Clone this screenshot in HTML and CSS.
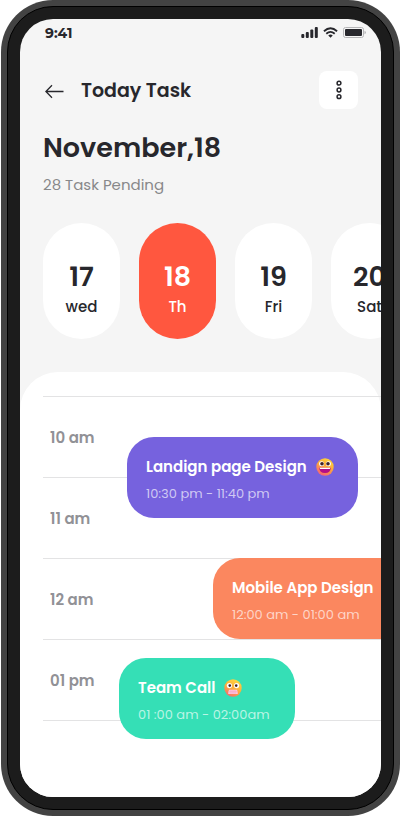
FILE: index.html
```html
<!DOCTYPE html>
<html lang="en">
<head>
<meta charset="utf-8">
<meta name="viewport" content="width=device-width, initial-scale=1">
<title>Today Task</title>
<link rel="stylesheet" href="styles.css">
</head>
<body>
<div class="phone">
<div class="bezel">
<main class="screen">
  <div class="status">
    <span class="clock">9:41</span>
    <svg class="signal" width="17" height="11" viewBox="0 0 17 11" aria-hidden="true"><rect x=".3" y="7" width="3" height="4" rx="1"/><rect x="4.8" y="5" width="3" height="6" rx="1"/><rect x="9.3" y="2.6" width="3" height="8.4" rx="1"/><rect x="13.8" y="0" width="3" height="11" rx="1"/></svg>
    <svg class="wifi" width="15" height="11" viewBox="0 0 16 11" aria-hidden="true"><g fill="none" stroke="#27272c" stroke-width="2"><path d="M1 4.1Q8-2.1 15 4.1"/><path d="M3.5 6.8Q8 2.9 12.5 6.8"/></g><path d="M5.6 8.6Q8 6.7 10.4 8.6L8 11Z"/></svg>
    <svg class="battery" width="23" height="11" viewBox="0 0 23 11" aria-hidden="true"><rect x=".5" y=".5" width="20" height="10" rx="2" fill="none" stroke="#b5b5b7"/><rect x="2" y="2" width="17" height="7" rx="1"/><path d="M21.5 3.8Q23 4.3 23 5.5T21.5 7.2Z" fill="#b5b5b7"/></svg>
  </div>

  <header class="topbar">
    <button class="back" aria-label="Back"><svg width="19" height="15" viewBox="0 0 19 15"><path d="M18.5 7.5H1.2M7 1.2L.9 7.5L7 13.8"/></svg></button>
    <h1>Today Task</h1>
    <button class="more" aria-label="More options"><svg width="8" height="20" viewBox="0 0 8 20"><circle cx="4" cy="3.2" r="1.9"/><circle cx="4" cy="10" r="1.9"/><circle cx="4" cy="16.7" r="1.9"/></svg></button>
  </header>

  <section class="summary">
    <h2>November,18</h2>
    <p>28 Task Pending</p>
  </section>

  <nav class="days" aria-label="Days">
    <button class="day"><b>17</b><span>wed</span></button>
    <button class="day active"><b>18</b><span>Th</span></button>
    <button class="day"><b>19</b><span>Fri</span></button>
    <button class="day"><b>20</b><span>Sat</span></button>
  </nav>

  <section class="sheet">
    <div class="timeline">
      <div class="hour">10 am</div>
      <div class="hour">11 am</div>
      <div class="hour">12 am</div>
      <div class="hour">01 pm</div>
      <div class="end"></div>

      <article class="event landing">
        <h3>Landign page Design
          <svg width="18" height="18" viewBox="0 0 18 18" aria-hidden="true">
            <defs><linearGradient id="grin" x1=".8" y1="0" x2=".3" y2="1"><stop offset="0" stop-color="#ffdc3c"/><stop offset=".5" stop-color="#fba63c"/><stop offset="1" stop-color="#f5617c"/></linearGradient></defs>
            <circle cx="9" cy="9" r="8.7" fill="url(#grin)"/>
            <circle cx="5.6" cy="5.7" r="2.5" fill="#fff"/><circle cx="12.4" cy="5.7" r="2.5" fill="#fff"/>
            <circle cx="6" cy="5.7" r="1.8" fill="#412225"/><circle cx="12" cy="5.7" r="1.8" fill="#412225"/>
            <path d="M3.2 9.8H14.8Q14.5 15 9 15T3.2 9.8Z" fill="#b40f86"/><path d="M3.7 9.8H14.3L13.9 11H4.1Z" fill="#fff"/>
          </svg>
        </h3>
        <p>10:30 pm - 11:40 pm</p>
      </article>
      <article class="event mobile">
        <h3>Mobile App Design</h3>
        <p>12:00 am - 01:00 am</p>
      </article>
      <article class="event team">
        <h3>Team Call
          <svg width="18" height="18" viewBox="0 0 18 18" aria-hidden="true">
            <defs><linearGradient id="grimace" x1=".8" y1="0" x2=".3" y2="1"><stop offset="0" stop-color="#ffda3f"/><stop offset=".55" stop-color="#fdac3d"/><stop offset="1" stop-color="#f56b70"/></linearGradient></defs>
            <circle cx="9" cy="9" r="8.7" fill="url(#grimace)"/>
            <circle cx="5.4" cy="6.6" r="2.6" fill="#fff"/><circle cx="12.6" cy="6.6" r="2.6" fill="#fff"/>
            <circle cx="5.8" cy="6.6" r="1.3" fill="#412225"/><circle cx="12.2" cy="6.6" r="1.3" fill="#412225"/>
            <path d="M5 10.8H13Q14 12.5 13.8 15H4.2Q4 12.5 5 10.8Z" fill="#ffc4dc"/><path d="M4.4 12.8H13.6M7 11V15M9 11V15M11 11V15" stroke="#f58fb8" stroke-width=".4"/>
          </svg>
        </h3>
        <p>01 :00 am - 02:00am</p>
      </article>
    </div>
  </section>
</main>
</div>
</div>
</body>
</html>
```
FILE: styles.css
```css
* { box-sizing: border-box; margin: 0; }
body {
  background: #fff;
  color: #27272c;
  font-family: Poppins, Inter, sans-serif;
}
button {
  border: 0;
  padding: 0;
  background: none;
  color: inherit;
  font: inherit;
  cursor: pointer;
}
svg { display: block; flex: none; }

.phone {
  margin: 0 1px 1px;
  padding: 6px;
  border-radius: 52px;
  background: #434343;
}
.bezel {
  padding: 12px;
  border: 1px solid #000;
  border-radius: 46px;
  background: #1c1c1c;
}
.screen {
  overflow: hidden;
  border-radius: 33px;
  background: #f5f5f5;
}

.status {
  display: flex;
  align-items: center;
  padding: 3px 15px 0 25px;
  height: 24px;
  fill: #27272c;
}
.clock {
  flex: 1;
  font-family: Montserrat, Poppins, sans-serif;
  font-size: 14px;
  font-weight: 700;
}
.wifi { margin: 0 5px; }

.topbar {
  display: flex;
  align-items: center;
  padding: 28px 23px 0 25px;
}
.topbar h1 {
  flex: 1;
  margin-left: 17px;
  padding-top: 2px;
  font-size: 19px;
  font-weight: 600;
  line-height: 28px;
}
.back path {
  fill: none;
  stroke: #27272c;
  stroke-width: 1.3;
}
.back { margin-top: 2px; }
.more {
  display: grid;
  place-items: center;
  width: 39px;
  height: 38px;
  border-radius: 8px;
  background: #fff;
}
.more circle {
  fill: none;
  stroke: #27272c;
  stroke-width: 1.5;
}

.summary { padding: 20px 23px 0; }
.summary h2 {
  font-size: 27px;
  font-weight: 600;
  line-height: 38px;
}
.summary p {
  margin-top: 6px;
  color: #88888a;
  font-size: 15px;
  line-height: 24px;
}

.days {
  display: flex;
  gap: 19px;
  overflow: hidden;
  padding: 26px 0 33px 23px;
}
.day {
  display: flex;
  flex: none;
  flex-direction: column;
  align-items: center;
  width: 77px;
  height: 116px;
  padding-top: 36px;
  border-radius: 39px;
  background: #fff;
}
.day b {
  font-size: 27px;
  font-weight: 600;
  line-height: 36px;
}
.day span {
  font-size: 15px;
  font-weight: 500;
  line-height: 24px;
}
.day.active {
  background: #ff573f;
  color: #fff;
}

.sheet {
  padding: 24px 0 76px 23px;
  border-radius: 38px 38px 0 0;
  background: #fff;
}
.timeline { position: relative; }
.hour {
  height: 81px;
  padding-left: 7px;
  border-top: 1px solid #e3e3e4;
  color: #919196;
  font-size: 15px;
  font-weight: 600;
  line-height: 81px;
}
.end { border-top: 1px solid #e3e3e4; }

.event {
  position: absolute;
  height: 81px;
  padding: 20px 19px 0;
  border-radius: 27px;
  color: #fff;
  white-space: nowrap;
}
.event h3 {
  display: flex;
  gap: 9px;
  align-items: center;
  font-size: 15px;
  font-weight: 600;
  line-height: 20px;
}
.event p {
  margin-top: 7px;
  color: #ffffffa8;
  font-size: 13px;
  line-height: 20px;
}
.landing {
  top: 41px;
  right: 23px;
  left: 84px;
  background: #7662de;
}
.mobile {
  top: 162px;
  right: 0;
  left: 170px;
  padding-right: 0;
  border-radius: 27px 0 0 27px;
  background: #fb875f;
}
.team {
  top: 262px;
  left: 76px;
  width: 176px;
  background: #35dfb6;
}
```
